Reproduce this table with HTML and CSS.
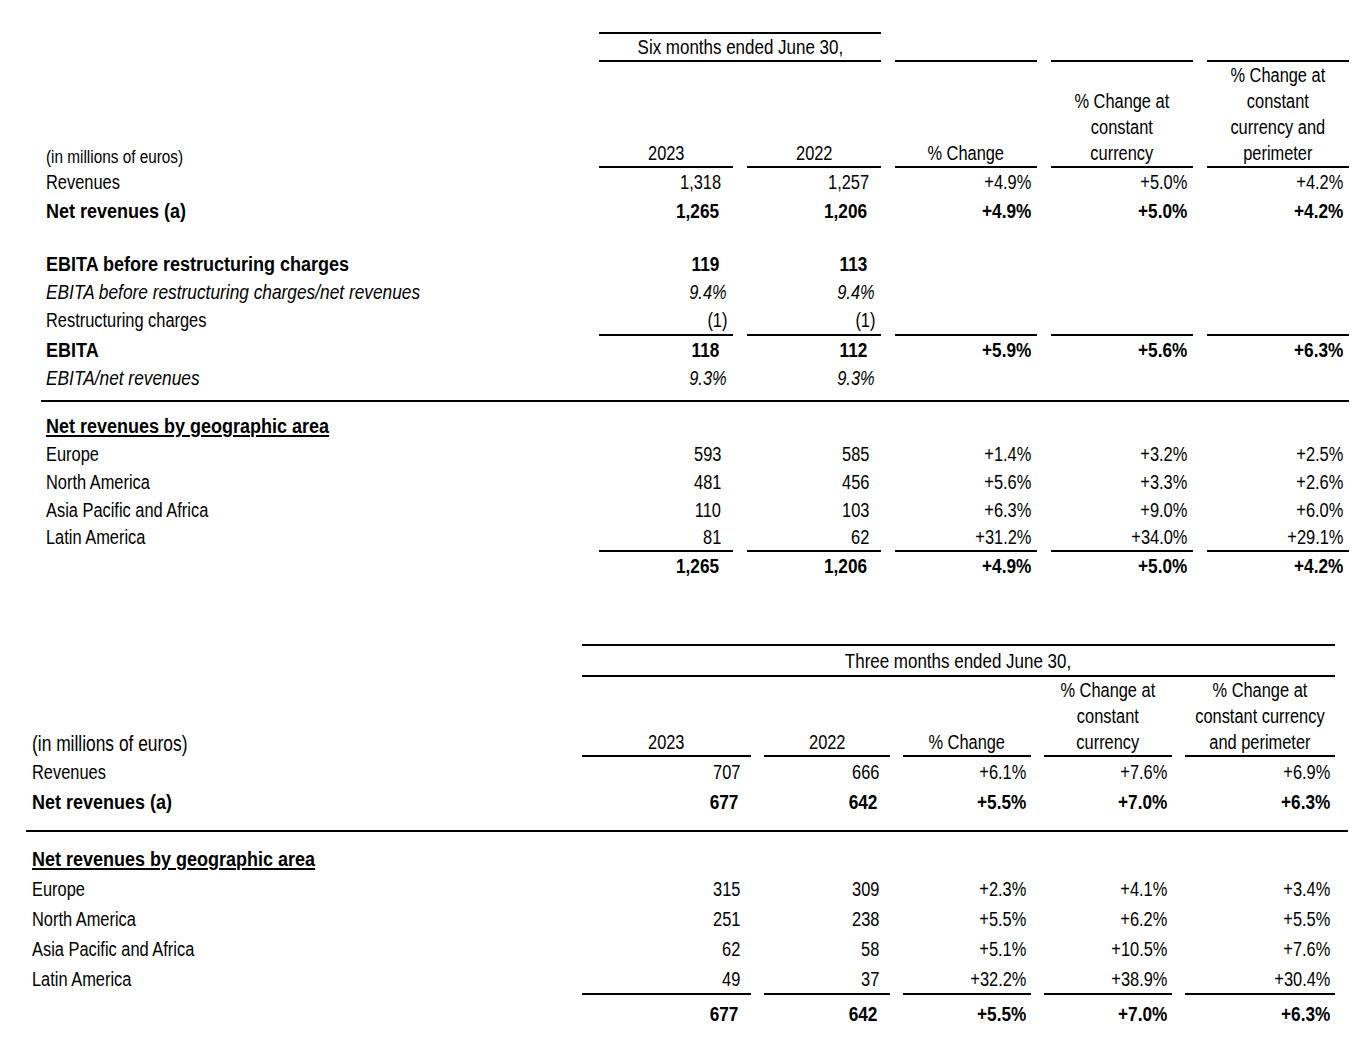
FILE: index.html
```html
<!DOCTYPE html>
<html lang="en">
<head>
<meta charset="utf-8">
<title>Net revenues</title>
<link rel="stylesheet" href="styles.css">
</head>
<body>
<div class="fin six">
  <div class="lbl"></div>
  <div class="span-head"><span>Six months ended June 30,</span></div>
  <div class="top-rule"></div>
  <div class="top-rule"></div>
  <div class="top-rule"></div>

  <div class="lbl unit"><span>(in millions of euros)</span></div>
  <div class="hd"><span>2023</span></div>
  <div class="hd"><span>2022</span></div>
  <div class="hd"><span>% Change</span></div>
  <div class="hd"><span>% Change at<br>constant<br>currency</span></div>
  <div class="hd"><span>% Change at<br>constant<br>currency and<br>perimeter</span></div>

  <div class="lbl r29"><span>Revenues</span></div>
  <div class="n a r29"><span>1,318</span></div>
  <div class="n a r29"><span>1,257</span></div>
  <div class="n p r29"><span>+4.9%</span></div>
  <div class="n p r29"><span>+5.0%</span></div>
  <div class="n p r29"><span>+4.2%</span></div>

  <div class="lbl b r29"><span>Net revenues (a)</span></div>
  <div class="n a b r29"><span>1,265</span></div>
  <div class="n a b r29"><span>1,206</span></div>
  <div class="n p b r29"><span>+4.9%</span></div>
  <div class="n p b r29"><span>+5.0%</span></div>
  <div class="n p b r29"><span>+4.2%</span></div>

  <div class="spacer s24"></div>

  <div class="lbl b"><span>EBITA before restructuring charges</span></div>
  <div class="n a b"><span>119</span></div>
  <div class="n a b"><span>113</span></div>
  <div class="e"></div><div class="e"></div><div class="e"></div>

  <div class="lbl i"><span>EBITA before restructuring charges/net revenues</span></div>
  <div class="n h i"><span>9.4%</span></div>
  <div class="n h i"><span>9.4%</span></div>
  <div class="e"></div><div class="e"></div><div class="e"></div>

  <div class="lbl"><span>Restructuring charges</span></div>
  <div class="n h ul"><span>(1)</span></div>
  <div class="n h ul"><span>(1)</span></div>
  <div class="e ul"></div><div class="e ul"></div><div class="e ul"></div>

  <div class="lbl b"><span>EBITA</span></div>
  <div class="n a b"><span>118</span></div>
  <div class="n a b"><span>112</span></div>
  <div class="n p b"><span>+5.9%</span></div>
  <div class="n p b"><span>+5.6%</span></div>
  <div class="n p b"><span>+6.3%</span></div>

  <div class="lbl i"><span>EBITA/net revenues</span></div>
  <div class="n h i"><span>9.3%</span></div>
  <div class="n h i"><span>9.3%</span></div>
  <div class="e"></div><div class="e"></div><div class="e"></div>

  <div class="rule-full m8"></div>

  <div class="lbl b first-geo"><span class="u">Net revenues by geographic area</span></div>
  <div class="e first-geo"></div><div class="e first-geo"></div><div class="e first-geo"></div><div class="e first-geo"></div><div class="e first-geo"></div>

  <div class="lbl"><span>Europe</span></div>
  <div class="n a"><span>593</span></div>
  <div class="n a"><span>585</span></div>
  <div class="n p"><span>+1.4%</span></div>
  <div class="n p"><span>+3.2%</span></div>
  <div class="n p"><span>+2.5%</span></div>

  <div class="lbl"><span>North America</span></div>
  <div class="n a"><span>481</span></div>
  <div class="n a"><span>456</span></div>
  <div class="n p"><span>+5.6%</span></div>
  <div class="n p"><span>+3.3%</span></div>
  <div class="n p"><span>+2.6%</span></div>

  <div class="lbl"><span>Asia Pacific and Africa</span></div>
  <div class="n a"><span>110</span></div>
  <div class="n a"><span>103</span></div>
  <div class="n p"><span>+6.3%</span></div>
  <div class="n p"><span>+9.0%</span></div>
  <div class="n p"><span>+6.0%</span></div>

  <div class="lbl r26"><span>Latin America</span></div>
  <div class="n a ul r26"><span>81</span></div>
  <div class="n a ul r26"><span>62</span></div>
  <div class="n p ul r26"><span>+31.2%</span></div>
  <div class="n p ul r26"><span>+34.0%</span></div>
  <div class="n p ul r26"><span>+29.1%</span></div>

  <div class="lbl"></div>
  <div class="n a b"><span>1,265</span></div>
  <div class="n a b"><span>1,206</span></div>
  <div class="n p b"><span>+4.9%</span></div>
  <div class="n p b"><span>+5.0%</span></div>
  <div class="n p b"><span>+4.2%</span></div>
</div>

<div class="fin three">
  <div class="lbl"></div>
  <div class="span-head"><span>Three months ended June 30,</span></div>

  <div class="lbl unit"><span>(in millions of euros)</span></div>
  <div class="hd"><span>2023</span></div>
  <div class="hd"><span>2022</span></div>
  <div class="hd"><span>% Change</span></div>
  <div class="hd"><span>% Change at<br>constant<br>currency</span></div>
  <div class="hd nw"><span>% Change at<br>constant currency<br>and perimeter</span></div>

  <div class="lbl"><span>Revenues</span></div>
  <div class="n a"><span>707</span></div>
  <div class="n a"><span>666</span></div>
  <div class="n p"><span>+6.1%</span></div>
  <div class="n p"><span>+7.6%</span></div>
  <div class="n p"><span>+6.9%</span></div>

  <div class="lbl b"><span>Net revenues (a)</span></div>
  <div class="n a b"><span>677</span></div>
  <div class="n a b"><span>642</span></div>
  <div class="n p b"><span>+5.5%</span></div>
  <div class="n p b"><span>+7.0%</span></div>
  <div class="n p b"><span>+6.3%</span></div>

  <div class="rule-full m13"></div>

  <div class="lbl b first-geo"><span class="u">Net revenues by geographic area</span></div>
  <div class="e first-geo"></div><div class="e first-geo"></div><div class="e first-geo"></div><div class="e first-geo"></div><div class="e first-geo"></div>

  <div class="lbl"><span>Europe</span></div>
  <div class="n a"><span>315</span></div>
  <div class="n a"><span>309</span></div>
  <div class="n p"><span>+2.3%</span></div>
  <div class="n p"><span>+4.1%</span></div>
  <div class="n p"><span>+3.4%</span></div>

  <div class="lbl"><span>North America</span></div>
  <div class="n a"><span>251</span></div>
  <div class="n a"><span>238</span></div>
  <div class="n p"><span>+5.5%</span></div>
  <div class="n p"><span>+6.2%</span></div>
  <div class="n p"><span>+5.5%</span></div>

  <div class="lbl"><span>Asia Pacific and Africa</span></div>
  <div class="n a"><span>62</span></div>
  <div class="n a"><span>58</span></div>
  <div class="n p"><span>+5.1%</span></div>
  <div class="n p"><span>+10.5%</span></div>
  <div class="n p"><span>+7.6%</span></div>

  <div class="lbl lastrow"><span>Latin America</span></div>
  <div class="n a ul lastrow"><span>49</span></div>
  <div class="n a ul lastrow"><span>37</span></div>
  <div class="n p ul lastrow"><span>+32.2%</span></div>
  <div class="n p ul lastrow"><span>+38.9%</span></div>
  <div class="n p ul lastrow"><span>+30.4%</span></div>

  <div class="lbl total"></div>
  <div class="n a b total"><span>677</span></div>
  <div class="n a b total"><span>642</span></div>
  <div class="n p b total"><span>+5.5%</span></div>
  <div class="n p b total"><span>+7.0%</span></div>
  <div class="n p b total"><span>+6.3%</span></div>
</div>
</body>
</html>
```

FILE: styles.css
```css
html, body {
  margin: 0;
  padding: 0;
  background: #fff;
}

body {
  font-family: "Liberation Sans", Arial, sans-serif;
  font-size: 20px;
  color: #000;
}

/* narrow face: Arial Narrow is Arial drawn at ~82% width */
.lbl > span,
.n > span,
.hd > span,
.span-head > span {
  display: inline-block;
  transform: scaleX(0.82);
}

.lbl > span { transform-origin: 0 50%; }
.n > span { transform-origin: 100% 50%; }
.hd > span,
.span-head > span { transform-origin: 50% 50%; }

.lbl.b > span { transform: scaleX(0.9); }
.n.b > span { transform: scaleX(0.86); }
.lbl.i > span { transform: scaleX(0.865); }

.fin {
  display: grid;
  align-items: stretch;
}

.six {
  margin: 32px 0 0 41px;
  width: 1308px;
  grid-template-columns: 544px 134px 134px 142px 142px 142px;
  column-gap: 14px;
  line-height: 28px;
}

.three {
  margin: 64px 0 0 26px;
  width: 1309px;
  grid-template-columns: 543px 169px 126px 128px 128px 150px;
  column-gap: 13px;
  line-height: 30px;
}

.lbl {
  grid-column: 1;
  white-space: nowrap;
}

.six .lbl { padding-left: 5px; }
.three .lbl { padding-left: 6px; }

.span-head {
  grid-column: 2 / 4;
  text-align: center;
  border-top: 2px solid #000;
  border-bottom: 2px solid #000;
  line-height: 26px;
  font-size: 20.7px;
}

.three .span-head {
  grid-column: 2 / 7;
  line-height: 29px;
}

.top-rule {
  border-bottom: 2px solid #000;
}

.unit {
  align-self: end;
  line-height: 26px;
}

.six .unit {
  font-size: 18.7px;
  margin-bottom: -2px;
}
.three .unit { font-size: 21.2px; }

.hd {
  display: flex;
  align-items: flex-end;
  justify-content: center;
  text-align: center;
  line-height: 26px;
  border-bottom: 2px solid #000;
}

.nw { white-space: nowrap; }

.n {
  text-align: right;
  white-space: nowrap;
}

.six .a { padding-right: 12px; }
.six .a.b { padding-right: 14px; }
.six .h { padding-right: 6px; }
.six .p { padding-right: 6px; }

.three .a { padding-right: 11px; }
.three .a.b { padding-right: 13px; }
.three .p { padding-right: 5px; }

.b {
  font-weight: 700;
}

.i {
  font-style: italic;
}

.u {
  text-decoration: underline;
  text-decoration-thickness: 2px;
  text-underline-offset: 2px;
}

.ul {
  border-bottom: 2px solid #000;
}

.r29 { line-height: 29px; }
.r26 { line-height: 26px; }

.lastrow { padding-top: 2px; line-height: 27px; }

.spacer {
  grid-column: 1 / -1;
}

.s24 { height: 24px; }

.rule-full {
  grid-column: 1 / -1;
  border-top: 2px solid #000;
  height: 0;
}

.three .rule-full { margin-right: -13px; }

.m8 { margin-top: 8px; }
.m13 { margin-top: 13px; }

.first-geo { margin-top: 10px; }
.three .first-geo { margin-top: 12px; }

.total { padding-top: 4px; }
```
